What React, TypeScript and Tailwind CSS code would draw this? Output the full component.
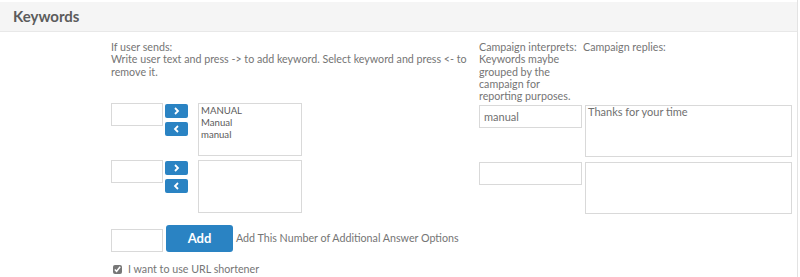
import React from "react";

const font = { fontFamily: "Lato, 'Open Sans', sans-serif" };

const ArrowButtons: React.FC = () => (
  <div className="flex flex-col gap-[4px] ml-[2px] mt-[1px]">
    <button
      type="button"
      className="w-[23px] h-[14px] rounded-[2px] bg-[#2a83c3] flex items-center justify-center"
    >
      <svg width="7" height="8" viewBox="0 0 7 8">
        <path d="M2 1 L5 4 L2 7" stroke="#fff" strokeWidth="1.8" fill="none" />
      </svg>
    </button>
    <button
      type="button"
      className="w-[23px] h-[14px] rounded-[2px] bg-[#2a83c3] flex items-center justify-center"
    >
      <svg width="7" height="8" viewBox="0 0 7 8">
        <path d="M5 1 L2 4 L5 7" stroke="#fff" strokeWidth="1.8" fill="none" />
      </svg>
    </button>
  </div>
);

interface RowProps {
  keywords: string[];
  interprets: string;
  reply: string;
}

const KeywordRow: React.FC<RowProps> = ({ keywords, interprets, reply }) => (
  <div className="flex">
    <div className="w-[368px] flex items-start">
      <input
        type="text"
        className="w-[52px] h-[23px] border border-[#d9d9d9] outline-none"
      />
      <ArrowButtons />
      <div className="ml-[10px] w-[104px] h-[53px] border border-[#d9d9d9] px-[2px] pt-[1px] text-[9.6px] leading-[12px] text-[#5a5a5a]">
        {keywords.map((k) => (
          <div key={k}>{k}</div>
        ))}
      </div>
    </div>
    <div className="w-[106px]">
      <input
        type="text"
        defaultValue={interprets}
        className="w-[103px] h-[23px] border border-[#d9d9d9] px-[4px] text-[11px] text-[#707070] outline-none"
        style={font}
      />
    </div>
    <textarea
      defaultValue={reply}
      className="mt-[2px] w-[207px] h-[52px] border border-[#d9d9d9] px-[2px] text-[11px] leading-[12px] text-[#707070] resize-none outline-none"
      style={font}
    />
  </div>
);

const App: React.FC = () => {
  return (
    <div className="w-[800px] h-[277px] bg-white text-[#757575]" style={font}>
      <div className="w-[798px] h-full pt-[2px] border-r border-[#e3e3e3]">
        {/* Header */}
        <div className="h-[30px] bg-[#f5f5f5] border-b border-[#e8e8e8] flex items-center px-[13px]">
          <h2 className="text-[15px] font-bold text-[#5c5c5c]">Keywords</h2>
        </div>

        <div className="pl-[111px] pt-[9px]">
          {/* Column labels */}
          <div className="flex text-[10.7px] leading-[12.25px]">
            <div className="w-[368px] pr-[4px]">
              <div>If user sends:</div>
              <div>
                Write user text and press -&gt; to add keyword. Select keyword and press &lt;- to
                remove it.
              </div>
            </div>
            <div className="w-[104px]">
              <div>Campaign interprets:</div>
              <div className="pr-[6px]">Keywords maybe grouped by the campaign for reporting purposes.</div>
            </div>
            <div>Campaign replies:</div>
          </div>

          {/* Rows */}
          <div className="mt-[1px] flex flex-col gap-[3px]">
            <KeywordRow
              keywords={["MANUAL", "Manual", "manual"]}
              interprets="manual"
              reply="Thanks for your time"
            />
            <KeywordRow keywords={[]} interprets="" reply="" />
          </div>

          {/* Add options */}
          <div className="mt-[11px] flex items-end">
            <input
              type="text"
              className="w-[52px] h-[23px] border border-[#d9d9d9] outline-none"
            />
            <button
              type="button"
              className="ml-[3px] w-[67px] h-[27px] rounded-[3px] bg-[#2a83c3] text-white text-[13px] font-bold"
            >
              Add
            </button>
            <span className="ml-[3px] mb-[6px] text-[10.7px]">
              Add This Number of Additional Answer Options
            </span>
          </div>

          {/* URL shortener */}
          <label className="mt-[9px] flex items-center text-[10.7px]">
            <input type="checkbox" defaultChecked className="ml-[2px] w-[9px] h-[9px] accent-[#777]" />
            <span className="ml-[6px]">I want to use URL shortener</span>
          </label>
        </div>
      </div>
    </div>
  );
};

export default App;
